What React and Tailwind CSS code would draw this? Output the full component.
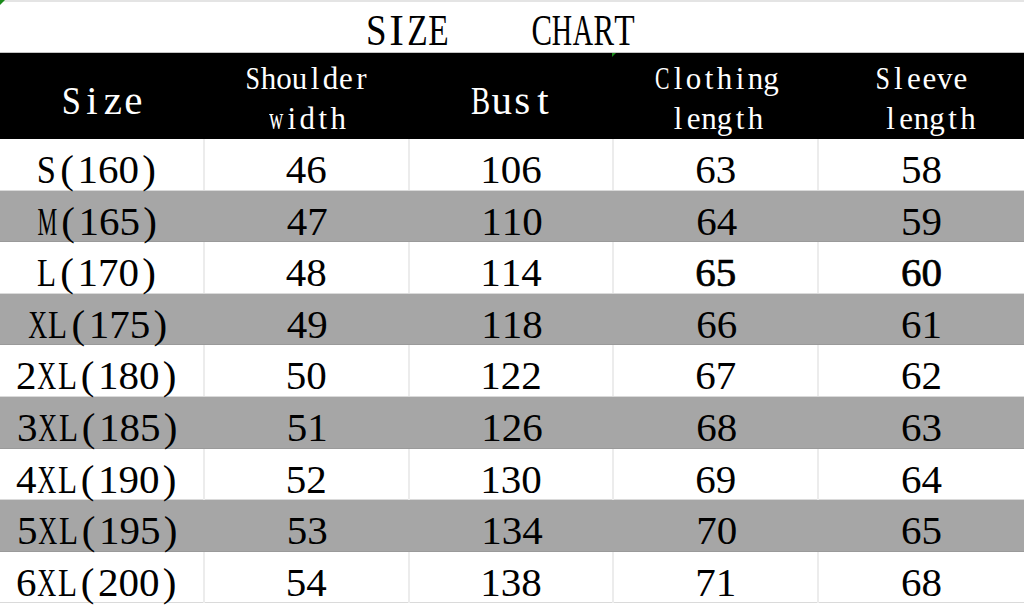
import React from 'react'

const rows = [
  ['S(160)', '46', '106', '63', '58'],
  ['M(165)', '47', '110', '64', '59'],
  ['L(170)', '48', '114', '65', '60'],
  ['XL(175)', '49', '118', '66', '61'],
  ['2XL(180)', '50', '122', '67', '62'],
  ['3XL(185)', '51', '126', '68', '63'],
  ['4XL(190)', '52', '130', '69', '64'],
  ['5XL(195)', '53', '134', '70', '65'],
  ['6XL(200)', '54', '138', '71', '68'],
]

// SimSun-style latin: every glyph sits in a half-width cell,
// wide Times glyphs get squeezed to fit it
const squeezeMap = {
  M: 'scale-x-[0.54]',
  m: 'scale-x-[0.6]',
  w: 'scale-x-[0.64]',
  A: 'scale-x-[0.64]',
  H: 'scale-x-[0.64]',
  X: 'scale-x-[0.64]',
  B: 'scale-x-[0.7]',
  C: 'scale-x-[0.7]',
  R: 'scale-x-[0.7]',
  L: 'scale-x-[0.76]',
  T: 'scale-x-[0.76]',
  Z: 'scale-x-[0.76]',
  E: 'scale-x-[0.76]',
  S: 'scale-x-[0.84]',
}

function Mono({ text, cell }) {
  return (
    <span className="inline-flex">
      {[...text].map((ch, i) => (
        <span key={i} className={`${cell} inline-flex justify-center whitespace-pre`}>
          <span className={`inline-block ${squeezeMap[ch] || ''}`}>{ch}</span>
        </span>
      ))}
    </span>
  )
}

function HeadCell({ lines, big }) {
  if (big) {
    return (
      <div className="flex items-center justify-center pt-2 text-[41px] leading-none">
        <Mono text={lines[0]} cell="w-[20.7px]" />
      </div>
    )
  }
  return (
    <div className="flex flex-col items-center justify-center pt-[6px] text-[31px] leading-[40px]">
      {lines.map((l) => (
        <Mono key={l} text={l} cell="w-[15.5px]" />
      ))}
    </div>
  )
}

export default function App() {
  return (
    <div className="relative w-[1024px] h-[607px] overflow-hidden bg-white text-black font-['Liberation_Serif',serif]">
      {/* comment markers */}
      <div className="absolute left-0 top-0 w-0 h-0 border-t-[5px] border-r-[5px] border-t-[#1a8a1a] border-r-transparent" />
      <div className="absolute left-[612px] top-[53px] w-0 h-0 border-t-[4px] border-r-[4px] border-t-[#1a8a1a] border-r-transparent z-10" />

      {/* Title */}
      <div className="h-[53px] border-t-2 border-t-[#e4e4e4] border-b border-b-[#c4c4c4] flex items-center justify-center pt-[8px] pr-[24px] text-[44px] leading-none">
        <Mono text="SIZE    CHART" cell="w-[20.7px]" />
      </div>

      {/* Header */}
      <div className="grid grid-cols-5 h-[86px] bg-black text-white">
        <HeadCell lines={['Size']} big />
        <HeadCell lines={['Shoulder', 'width']} />
        <HeadCell lines={['Bust']} big />
        <HeadCell lines={['Clothing', 'length']} />
        <HeadCell lines={['Sleeve', ' length']} />
      </div>

      {/* Body */}
      {rows.map((r, ri) => {
        const gray = ri % 2 === 1
        return (
          <div
            key={r[0]}
            className={`grid grid-cols-5 h-[51.6px] border-b ${gray ? 'bg-[#a6a6a6] border-b-[#9a9a9a]' : 'bg-white border-b-[#dadada]'}`}
          >
            {r.map((v, ci) => (
              <div
                key={ci}
                className={`flex items-center justify-center pt-[10px] text-[41px] leading-none ${ci === 0 ? 'pr-[7px]' : ''} ${!gray && ci < 4 ? 'border-r-2 border-r-[#ececec]' : ''} ${ri === 2 && ci > 2 ? '[-webkit-text-stroke:0.7px_black]' : ''}`}
              >
                <Mono text={v} cell="w-[20.5px]" />
              </div>
            ))}
          </div>
        )
      })}
    </div>
  )
}
